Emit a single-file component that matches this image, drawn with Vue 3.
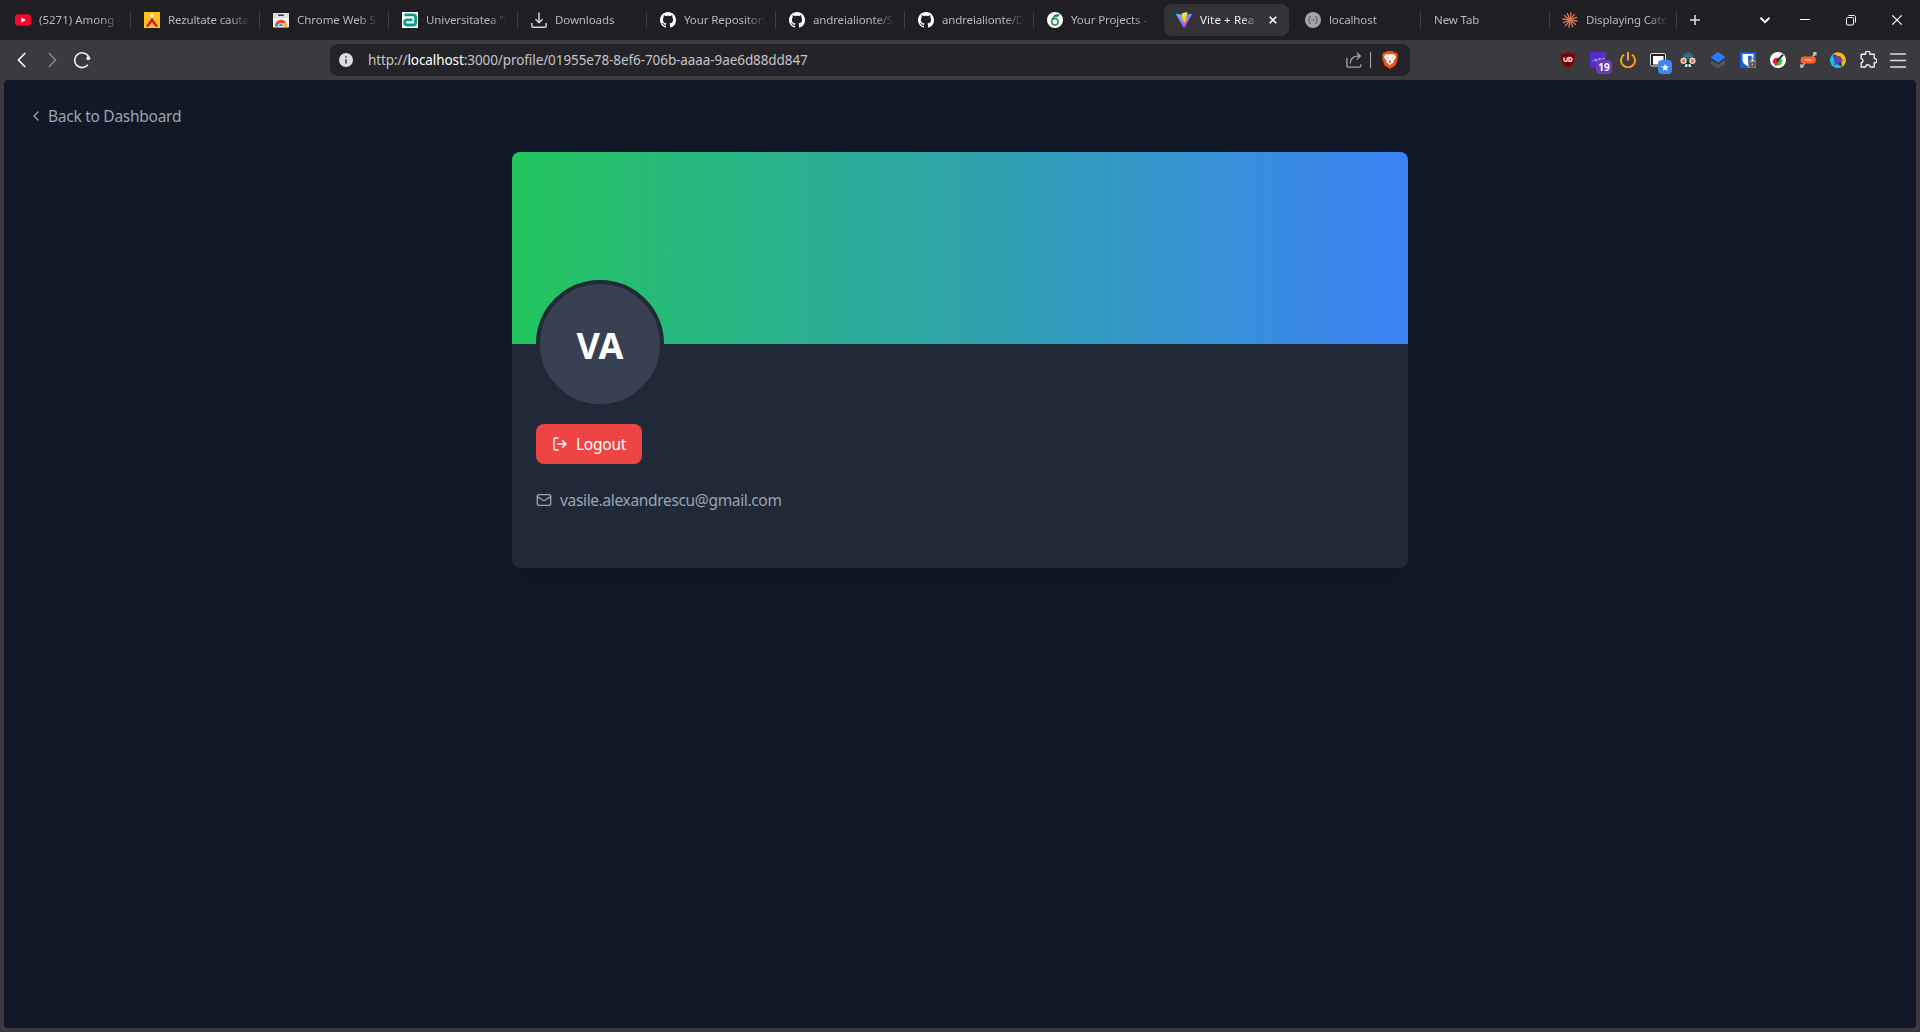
<script setup>
const tabs = [
  { icon: 'youtube', title: '(5271) Among U', ls: 0 },
  { icon: 'aliexpress', title: 'Rezultate cauta', ls: -0.15 },
  { icon: 'store', title: 'Chrome Web S', ls: -0.05 },
  { icon: 'univ', title: 'Universitatea "O', ls: -0.1 },
  { icon: 'download', title: 'Downloads', ls: -0.1 },
  { icon: 'github', title: 'Your Repositori', ls: -0.1 },
  { icon: 'github', title: 'andreialionte/S', ls: -0.15 },
  { icon: 'github', title: 'andreialionte/D', ls: -0.15 },
  { icon: 'overleaf', title: 'Your Projects -', ls: -0.1 },
  { icon: 'vite', title: 'Vite + Rea', ls: 0.12, active: true },
  { icon: 'localhost', title: 'localhost', ls: -0.1 },
  { icon: '', title: 'New Tab', ls: -0.1 },
  { icon: 'claude', title: 'Displaying Cate', ls: -0.15 },
]
const rays = [0, 30, 60, 90, 120, 150, 180, 210, 240, 270, 300, 330]
</script>

<template>
  <div class="browser">
    <header class="tabstrip">
      <div class="tabs">
        <div
          v-for="(t, i) in tabs"
          :key="i"
          class="tab"
          :class="{ active: t.active, line: !t.active && i !== 8 }"
        >
          <svg v-if="t.icon" class="fav" viewBox="0 0 16 16">
            <g v-if="t.icon === 'youtube'">
              <rect y="2.2" width="16" height="11.6" rx="3" fill="#ff0033" />
              <path d="M6.3 5.4 11 8l-4.700 2.600z" fill="#fff" />
            </g>
            <g v-else-if="t.icon === 'aliexpress'">
              <rect width="16" height="16" fill="#ffc220" />
              <path d="M8 1.200 9 3l2 .8-2 .8-1 2-1-2-2-.8 2-.8z" fill="#fff" />
              <path d="M3 14.500C5 12.500 6.500 10 8 7.700c1.500 2.300 3 4.800 5 6.800" fill="none" stroke="#d3123a" stroke-width="2.300" />
            </g>
            <g v-else-if="t.icon === 'store'">
              <rect y="1" width="16" height="14.500" rx="1" fill="#f1f1f1" />
              <rect y="1" width="16" height="5" fill="#dedede" />
              <rect x="5" y="2.500" width="6" height="1.600" rx=".8" fill="#333" />
              <path d="M2 14.500a6 6 0 0 1 12 0" fill="#ea4335" />
              <path d="M2 14.500a6 6 0 0 1 1-4l3 4z" fill="#34a853" />
              <path d="M14 14.500a6 6 0 0 0-1-4H8l2 4z" fill="#fbbc05" />
              <path d="M3 10.500a6 6 0 0 1 10 0z" fill="#ea4335" />
              <path d="M5 14.500a3 3 0 0 1 6 0z" fill="#4285f4" stroke="#fff" stroke-width=".8" />
            </g>
            <g v-else-if="t.icon === 'univ'">
              <rect width="16" height="16" fill="#fff" />
              <path d="M2.500 2.900h8.700c2 0 2.400 1 2.400 2.600v5c0 1.900-.8 2.500-2.500 2.500H5c-1.700 0-2.400-.8-2.400-2.400S3.400 7.800 5 7.800h5.500" fill="none" stroke="#079b8b" stroke-width="2.800" />
            </g>
            <path v-else-if="t.icon === 'download'" d="M8 .5v10.200M4.500 7.300 8 10.800l3.500-3.500M.8 11v3c0 .8.300 1.200 1.200 1.200h12c.9 0 1.200-.4 1.200-1.200v-3" fill="none" stroke="#d5d4d8" stroke-width="1.500" />
            <path v-else-if="t.icon === 'github'" fill="#fff" d="M8 0C3.580 0 0 3.580 0 8c0 3.540 2.290 6.530 5.470 7.590.4.070.55-.17.55-.38 0-.19-.01-.82-.01-1.490-2.010.37-2.530-.49-2.690-.94-.09-.23-.48-.94-.82-1.130-.28-.15-.68-.52-.01-.53.63-.01 1.080.58 1.230.82.72 1.210 1.870.87 2.330.66.07-.52.28-.87.51-1.070-1.780-.2-3.640-.89-3.640-3.950 0-.87.31-1.590.82-2.150-.08-.2-.36-1.020.08-2.120 0 0 .67-.21 2.200.82.64-.18 1.320-.27 2-.27s1.360.09 2 .27c1.530-1.040 2.200-.82 2.200-.82.44 1.100.16 1.920.08 2.120.51.56.82 1.270.82 2.150 0 3.070-1.870 3.750-3.650 3.950.29.25.54.73.54 1.480 0 1.070-.01 1.930-.01 2.200 0 .21.15.46.55.38A8.010 8.010 0 0 0 16 8c0-4.420-3.580-8-8-8z" />
            <g v-else-if="t.icon === 'overleaf'">
              <circle cx="8" cy="8" r="8" fill="#fff" />
              <path d="M11.500 2.900C8.500 3 4.800 5.800 4.800 9.600a3.200 3.200 0 1 0 3.200-3c-1.500 0-2.500.8-3 1.800M7 3.700c1.500-.5 3-.8 4.500-.8L9.500 5" fill="none" stroke="#138a48" stroke-width="1.500" />
            </g>
            <g v-else-if="t.icon === 'vite'">
              <defs>
                <linearGradient id="va" x1="0" y1="0" x2=".6" y2="1"><stop stop-color="#41d1ff" /><stop offset="1" stop-color="#bd34fe" /></linearGradient>
                <linearGradient id="vb" x1="0" y1="0" x2="0" y2="1"><stop stop-color="#ffea83" /><stop offset=".2" stop-color="#ffdd35" /><stop offset="1" stop-color="#ffa800" /></linearGradient>
              </defs>
              <path d="M15.900 2.400 8.400 15.700a.4.400 0 0 1-.7 0L.1 2.400a.4.400 0 0 1 .4-.6L8 3.100l7.500-1.300a.4.400 0 0 1 .4.600z" fill="url(#va)" />
              <path d="M11.500.1 6 1.200 5.600 7.500l1.700-.3-.5 2.600 1.400-.4-.7 3.500L11.600 6l-1.700.3z" fill="url(#vb)" />
            </g>
            <g v-else-if="t.icon === 'localhost'">
              <circle cx="8" cy="8" r="8" fill="#a4a4a6" />
              <path d="M6 4.500c-1.400 0-1.600.5-1.600 1.700 0 1-.2 1.600-1.200 1.800 1 .2 1.200.8 1.200 1.800 0 1.200.2 1.700 1.600 1.700M10 4.500c1.400 0 1.600.5 1.600 1.700 0 1 .2 1.600 1.200 1.800-1 .2-1.200.8-1.200 1.800 0 1.200-.2 1.700-1.600 1.700M6.300 8h3.400" fill="none" stroke="#66666a" stroke-width="1.200" />
            </g>
            <g v-else stroke="#d97757" stroke-width="1.300" stroke-linecap="round">
              <line v-for="r in rays" :key="r" x1="8" y1="8" x2="8" y2=".8" :transform="`rotate(${r + 8} 8 8)`" />
            </g>
          </svg>
          <span class="title"><span :style="{ letterSpacing: t.ls + 'px' }">{{ t.title }}</span></span>
          <svg v-if="t.active" class="close" viewBox="0 0 8 8"><path d="m.7.700 6.600 6.600M7.300.7.700 7.300" stroke="#fff" stroke-width="1.600" /></svg>
        </div>
      </div>
      <svg class="plus" viewBox="0 0 10 10"><path d="M5 0v10M0 5h10" stroke="#e0dfe3" stroke-width="1.500" /></svg>
      <div class="window">
        <svg class="chevron" width="12" height="12" viewBox="0 0 12 12"><path d="M1.500 3.800 6 8.200l4.500-4.400" stroke-width="2" /></svg>
        <svg width="12" height="12" viewBox="0 0 12 12"><path d="M1 5.500h10" /></svg>
        <svg width="12" height="12" viewBox="0 0 12 12"><rect x="1.500" y="3.500" width="7" height="7.500" rx="1" /><path d="M3.500 1.500h5.300c1.200 0 1.700.7 1.700 1.700v5.300" /></svg>
        <svg width="12" height="12" viewBox="0 0 12 12"><path d="m1.300 1.300 9.400 9.400M10.700 1.300l-9.400 9.400" stroke-width="1.200" /></svg>
      </div>
    </header>

    <div class="toolbar">
      <div class="nav">
        <svg width="10" height="18" viewBox="0 0 10 18"><path d="M8.200 2 1.500 9l6.700 7" stroke="#fff" /></svg>
        <svg width="10" height="18" viewBox="0 0 10 18"><path d="m1.800 2 6.700 7-6.700 7" stroke="#858489" /></svg>
        <svg class="reload" width="18" height="18" viewBox="0 0 18 18"><path d="M14.900 13.800A7.400 7.400 0 1 1 15.500 5.500" stroke="#f2f2f3" /><circle cx="15.300" cy="7.200" r="1.900" fill="#fff" /></svg>
      </div>
      <div class="address">
        <svg class="info" viewBox="0 0 14 14"><circle cx="7" cy="7" r="7" fill="#dddce1" /><path d="M7 6.300v4.300M7 3.300v1.500" stroke="#333237" stroke-width="1.400" /></svg>
        <span class="url">http://<b>localhost</b>:3000/profile/01955e78-8ef6-706b-aaaa-9ae6d88dd847</span>
        <svg class="share" viewBox="0 0 16 16" fill="none" stroke="#a9a8ad" stroke-width="1.300"><path d="M.9 5.800v7.700c0 1 .5 1.600 1.500 1.600h11c1 0 1.500-.5 1.500-1.600v-1.200" /><path d="M4.200 11.600c.3-4.300 3-7.200 7-7.500h3M10.700.7l3.600 3.400-3.600 3.500" /></svg>
        <i class="divider" />
        <svg class="brave" viewBox="0 0 16 18">
          <path d="M5 0h6l1.500 1.500 1.700-.2L16 3.700l-.6 1.600.5 1.600-2.200 7.400L8 18l-5.700-3.700L.1 6.900l.5-1.600L0 3.700l1.800-2.400 1.700.2z" fill="#fb4f08" />
          <path d="m3.800 3 2.300.4L8 3l1.900.4 2.300-.4 1.700 2.400-.6 2-2 2.400.6 1.800-2 .8L8 14.600l-1.900-2.200-2-.8.6-1.800-2-2.400-.6-2z" fill="#fff" />
          <path d="m4.300 6 2.400.7-.5 1zm7.400 0-2.400.7.500 1zM8 7.200l-.4 2.600L6.300 11 8 11.700 9.700 11 8.400 9.800z" fill="#fb4f08" />
        </svg>
      </div>
      <div class="extensions">
        <span class="ext"><svg width="16" height="16" viewBox="0 0 16 16"><path d="M8 0c2 1.500 4 2.200 7 2.300C15 9 13.500 13.500 8 16 2.500 13.500 1 9 1 2.300 4 2.200 6 1.500 8 0z" fill="#800000" /><path d="M4 5.500v2.300c0 2 3.200 2 3.200 0V5.500M9 5.500c4-.4 4 4.300 0 3.900z" fill="none" stroke="#fff" stroke-width="1.300" /></svg></span>
        <span class="ext"><svg width="16" height="16" viewBox="0 0 16 16"><rect width="16" height="16" fill="#512bd4" /><path d="M2.500 9h1M5 9.500V7l2 2.500V6.500M9 9.500V6.600h2M9 8h2M12 6.600h3" fill="none" stroke="#cfc4f7" stroke-width=".8" /></svg><em class="badge purple">19</em></span>
        <span class="ext"><svg width="16" height="16" viewBox="0 0 16 16" fill="none" stroke="#f9a11b" stroke-width="2"><path d="M4.200 2.500a7 7 0 1 0 7.600 0M8 0v8.500" /></svg></span>
        <span class="ext"><svg width="16" height="16" viewBox="0 0 16 16"><rect x=".5" y="1.500" width="15" height="12.500" rx="1.500" fill="#222" stroke="#ddd" /><rect x="3" y="4" width="10.500" height="8.500" fill="#fff" /></svg><em class="badge blue">★</em></span>
        <span class="ext"><svg width="16" height="16" viewBox="0 0 16 16"><path d="M2.500 8C2 3 4.500.8 8 .6S14 3 13.500 8z" fill="#356d7a" /><path d="M2 7h12l-1 8.300H3z" fill="#173942" /><path d="M5.500 12h5l1 3h-7z" fill="#c3e2e6" /><path d="M8 12v4" stroke="#173942" /><g fill="#f26b4e" stroke="#f4dfd4" stroke-width="1.300"><circle cx="3.600" cy="8.800" r="2.500" /><circle cx="12.400" cy="8.800" r="2.500" /></g></svg></span>
        <span class="ext"><svg width="16" height="16" viewBox="0 0 16 16"><path d="m1 9.200 7 4.400 7-4.400M1 11.200l7 4.300 7-4.300" fill="none" stroke="#59636e" stroke-width="1.100" /><path d="m8 0 7.500 5.300L8 10.500.5 5.300z" fill="#267dff" /></svg></span>
        <span class="ext"><svg width="16" height="16" viewBox="0 0 16 16"><rect width="16" height="16" rx="1" fill="#175ddc" /><path d="M2.500 2h11v6c0 3-2.800 4.900-5.500 6.200C5.200 12.900 2.500 11 2.500 8z" fill="#fff" /><path d="M8 3.700h3.700V8c0 2-1.900 3.300-3.700 4.200z" fill="#175ddc" /><rect x="8.500" y="9.500" width="7.500" height="6.500" rx="1" fill="#565656" stroke="#ddd" stroke-width=".5" /><path d="M10.200 9.500V8.400c0-2.600 4.100-2.600 4.100 0v1.100" fill="none" stroke="#777" stroke-width="1.300" /><path d="M12.200 11.500v2" stroke="#ddd" /></svg></span>
        <span class="ext"><svg width="16" height="16" viewBox="0 0 16 16"><circle cx="8" cy="8" r="8" fill="#fff" /><path d="M2.500 10c.5-3.500 3.500-4.800 6.500-4L5 13z" fill="#ff1744" /><path d="M4.500 14c2.500.5 4.500-3 6-5.500L7 7z" fill="#e31837" /><path d="M7 14c4.500-.5 6-3.500 5-7L9 7.500z" fill="#13d83b" /><path d="m6 8.500 6.500-6.500 1.200 1.200-5.700 6.300z" fill="#17291b" /></svg></span>
        <span class="ext"><svg width="17" height="16" viewBox="0 0 17 16"><path d="m1 15 4-4M12 5l4-4" stroke="#bbb" stroke-width="1.500" /><rect x="13" width="3.500" height="3.500" fill="#bbb" /><path d="m.3 11.500 4 3.500-4 1z" fill="#ccc" /><rect x=".7" y="4.500" width="15" height="7" rx="3" fill="#ff6327" /><path d="M5 8h6.500" stroke="#d1b0a1" stroke-width="1.600" /></svg></span>
        <span class="ext"><svg width="16" height="16" viewBox="0 0 16 16"><path d="M2.500 2.200A8 8 0 1 1 12 15L11 5z" fill="#fdb913" /><path d="M2.800 2A8 8 0 0 0 12.500 14.700L5 11z" fill="#14bdf0" /><path d="m4.500 2 9 6.200-9 5.300z" fill="#6244bb" /></svg></span>
        <span class="ext"><svg width="18" height="18" viewBox="0 0 18 18"><path d="M2.200 3.200h4.300a2.300 2.300 0 1 1 4.400 0h4.300v4.300a2.200 2.200 0 1 1 0 4.300V16h-4a2.300 2.300 0 0 0-4.600 0H2.200v-4.200a2.200 2.200 0 0 0 0-4.300z" fill="none" stroke="#eee" stroke-width="1.400" stroke-linejoin="round" /></svg></span>
        <span class="ext"><svg width="18" height="16" viewBox="0 0 18 16"><path d="M1 2h16M1 8.500h16M1 15h16" stroke="#dedde1" stroke-width="1.500" /></svg></span>
      </div>
    </div>

    <main class="page">
      <a class="back">
        <svg width="16" height="16" viewBox="0 0 24 24"><path d="m15 18-6-6 6-6" /></svg>
        <span>Back to Dashboard</span>
      </a>
      <section class="card">
        <div class="banner" />
        <div class="body">
          <div class="avatar"><span>VA</span></div>
          <button class="logout">
            <svg width="16" height="16" viewBox="0 0 24 24"><path d="M9 21H5a2 2 0 0 1-2-2V5a2 2 0 0 1 2-2h4" /><path d="m16 17 5-5-5-5M21 12H9" /></svg>
            <span>Logout</span>
          </button>
          <div class="email">
            <svg width="16" height="16" viewBox="0 0 24 24"><rect width="20" height="16" x="2" y="4" rx="2" /><path d="m22 7-8.970 5.700a1.940 1.940 0 0 1-2.060 0L2 7" /></svg>
            <span>vasile.alexandrescu@gmail.com</span>
          </div>
        </div>
      </section>
    </main>
  </div>
</template>

<style>
html,
body {
  margin: 0;
  background: #3b3a3e;
}
</style>

<style scoped>
* {
  box-sizing: border-box;
}
.browser {
  display: flex;
  flex-direction: column;
  width: 1920px;
  height: 1032px;
  overflow: hidden;
  background: #3b3a3e;
  font-family: 'Noto Sans', 'Open Sans', sans-serif;
}
svg {
  display: block;
  flex: none;
}
.tabstrip {
  display: flex;
  align-items: center;
  height: 40px;
  padding-left: 3px;
  background: #1f1e23;
}
.tabs {
  display: flex;
  gap: 4px;
}
.tab {
  position: relative;
  display: flex;
  align-items: center;
  gap: 8px;
  width: 125px;
  height: 32px;
  padding: 0 3px 0 12px;
  border-radius: 8px;
  color: #b8b7bb;
  font-size: 11.500px;
}
.tab:last-child {
  width: 124px;
  margin-left: -1px;
}
.tab.line::after {
  content: '';
  position: absolute;
  right: -3px;
  top: 8px;
  width: 1px;
  height: 16px;
  background: #3f3e43;
}
.tab.active {
  padding-right: 12px;
  background: #343338;
  color: #f0f0f2;
}
.fav {
  width: 16px;
  height: 16px;
}
.title {
  flex: 1;
  min-width: 0;
  overflow: hidden;
  white-space: nowrap;
  line-height: 20px;
  mask-image: linear-gradient(to right, #000 62px, transparent 82px);
}
.active .title {
  mask-image: linear-gradient(to right, #000 42px, transparent 59px);
}
.close {
  width: 8px;
  height: 8px;
}
.plus {
  width: 10px;
  height: 10px;
  margin-left: 16px;
}
.window {
  display: flex;
  gap: 34px;
  margin-left: auto;
  padding-right: 17px;
}
.window svg {
  fill: none;
  stroke: #fff;
}
.window .chevron {
  margin-right: -6px;
}
.toolbar {
  display: flex;
  align-items: center;
  height: 40px;
  padding-right: 7px;
}
.nav {
  display: flex;
  gap: 20px;
  width: 330px;
  padding-left: 17px;
}
.nav svg {
  fill: none;
  stroke-width: 1.600;
}
.nav .reload {
  margin-left: -4px;
}
.address {
  display: flex;
  align-items: center;
  width: 1080px;
  height: 32px;
  padding: 0 12px 0 9px;
  border-radius: 8px;
  background: #242328;
}
.info {
  width: 14px;
  height: 14px;
}
.url {
  flex: 1;
  margin-left: 15px;
  color: #c5c4c9;
  font-size: 13.500px;
  letter-spacing: -0.085px;
  white-space: nowrap;
}
.url b {
  color: #fff;
  font-weight: 400;
}
.share {
  width: 16px;
  height: 16px;
}
.divider {
  width: 1px;
  height: 16px;
  margin: 0 11px 0 8px;
  background: #aaa9ae;
}
.brave {
  width: 16px;
  height: 18px;
}
.extensions {
  display: flex;
  margin-left: auto;
}
.ext {
  position: relative;
  display: flex;
  align-items: center;
  justify-content: center;
  width: 30px;
  height: 30px;
}
.badge {
  position: absolute;
  display: flex;
  align-items: center;
  justify-content: center;
  top: 15px;
  height: 14px;
  border-radius: 4px;
  color: #fff;
  font-style: normal;
  font-weight: 700;
  font-size: 10px;
}
.purple {
  left: 13px;
  width: 16px;
  background: #673ab7;
}
.blue {
  left: 15px;
  width: 14px;
  background: #4285f4;
  font-family: 'DejaVu Sans', sans-serif;
}
.page {
  flex: 1;
  margin: 0 4px 4px;
  padding: 24px;
  border-radius: 4px;
  background: #111827;
  font-size: 15.500px;
}
.back {
  display: flex;
  align-items: center;
  gap: 4px;
  width: max-content;
  height: 24px;
  color: #9ca3af;
  letter-spacing: -0.27px;
}
.page svg {
  fill: none;
  stroke: currentColor;
  stroke-width: 2;
  stroke-linecap: round;
  stroke-linejoin: round;
}
.card {
  width: 896px;
  height: 416px;
  margin: 24px auto 0;
  border-radius: 8px;
  background: #1f2937;
  box-shadow: 0 20px 25px -5px rgba(0, 0, 0, 0.1), 0 8px 10px -6px rgba(0, 0, 0, 0.1);
}
.banner {
  height: 192px;
  border-radius: 8px 8px 0 0;
  background: linear-gradient(to right, #22c55e, #3b82f6);
}
.body {
  display: flex;
  flex-direction: column;
  align-items: flex-start;
  margin-top: -64px;
  padding: 0 24px;
}
.avatar {
  display: flex;
  align-items: center;
  justify-content: center;
  width: 128px;
  height: 128px;
  border: 4px solid #1f2937;
  border-radius: 50%;
  background: #374151;
  color: #fff;
  font-size: 36px;
  font-weight: 700;
}
.avatar span {
  padding-top: 2px;
}
.logout {
  display: flex;
  align-items: center;
  gap: 8px;
  width: 106px;
  height: 40px;
  margin-top: 16px;
  padding: 0 16px;
  border: 0;
  border-radius: 8px;
  background: #ef4444;
  color: #fff;
  font: inherit;
  letter-spacing: -0.25px;
}
.email {
  display: flex;
  align-items: center;
  gap: 8px;
  height: 24px;
  margin-top: 24px;
  color: #9ca3af;
  letter-spacing: -0.34px;
}
</style>
